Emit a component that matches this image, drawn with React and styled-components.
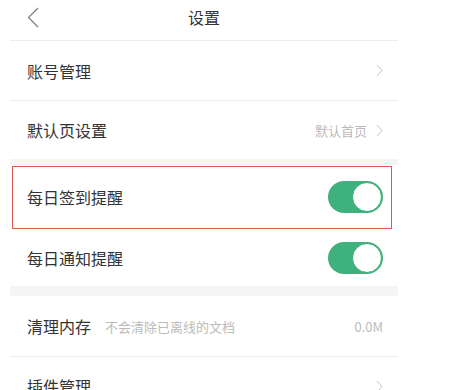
import React from 'react'
import styled, { createGlobalStyle } from 'styled-components'

const GlobalStyle = createGlobalStyle`
  html, body {
    margin: 0;
    padding: 0;
    background: #fff;
  }
  body {
    font-family: "Noto Sans CJK SC", "Noto Sans", sans-serif;
    color: #333;
  }
`

const Page = styled.div`
  width: 449px;
  height: 390px;
  overflow: hidden;
  background: #fff;
`

const List = styled.div`
  width: 388px;
  margin-left: 10px;
`

const Header = styled.div`
  position: relative;
  display: flex;
  align-items: center;
  justify-content: center;
  height: 41px;
  padding-bottom: 6px;
  box-sizing: border-box;
  border-bottom: 1px solid #eee;
`

const Back = styled.div`
  position: absolute;
  left: 17px;
  top: 7px;
  display: flex;
`

const Title = styled.div`
  font-size: 16px;
  color: #333;
`

const Row = styled.div`
  position: relative;
  display: flex;
  align-items: center;
  height: ${props => props.h}px;
  padding: 0 15px 0 17px;
  box-sizing: border-box;
  border-bottom: ${props => (props.line ? '1px solid #eee' : 'none')};
  &::after {
    content: "";
    display: ${props => (props.marked ? 'block' : 'none')};
    position: absolute;
    top: 1px;
    bottom: 0;
    left: 2px;
    right: 6px;
    border: 1.5px solid #e0584c;
    pointer-events: none;
  }
`

const Label = styled.div`
  font-size: 16px;
  color: #333;
`

const Hint = styled.div`
  margin-left: 14px;
  font-size: 13px;
  color: #bbb;
`

const Side = styled.div`
  margin-left: auto;
  display: flex;
  align-items: center;
  gap: 9px;
  font-size: 13px;
  color: #bbb;
`

const Band = styled.div`
  height: ${props => props.h}px;
  background: #f5f5f5;
`

const Track = styled.div`
  position: relative;
  width: 55px;
  height: 32px;
  border-radius: 16px;
  background: #3fb17d;
`

const Knob = styled.div`
  position: absolute;
  top: 1px;
  right: 1px;
  width: 30px;
  height: 30px;
  box-sizing: border-box;
  border-radius: 50%;
  background: #fff;
  border: 1px solid #3aa974;
`

const Chevron = () => (
  <svg width="7" height="13" viewBox="0 0 7 13">
    <polyline points="1,1 6,6.5 1,12" fill="none" stroke="#c4c4c4" strokeWidth="1" />
  </svg>
)

const Switch = () => (
  <Track>
    <Knob />
  </Track>
)

export default function App() {
  return (
    <Page>
      <GlobalStyle />
      <List>
        <Header>
          <Back>
            <svg width="12" height="21" viewBox="0 0 12 21">
              <polyline points="11,1 1.5,10.5 11,20" fill="none" stroke="#777" strokeWidth="1.1" />
            </svg>
          </Back>
          <Title>设置</Title>
        </Header>
        <Row h={60} line>
          <Label>账号管理</Label>
          <Side>
            <Chevron />
          </Side>
        </Row>
        <Row h={58}>
          <Label>默认页设置</Label>
          <Side>
            默认首页
            <Chevron />
          </Side>
        </Row>
        <Band h={6} />
        <Row h={64} marked>
          <Label>每日签到提醒</Label>
          <Side>
            <Switch />
          </Side>
        </Row>
        <Row h={57}>
          <Label>每日通知提醒</Label>
          <Side>
            <Switch />
          </Side>
        </Row>
        <Band h={10} />
        <Row h={61} line>
          <Label>清理内存</Label>
          <Hint>不会清除已离线的文档</Hint>
          <Side>0.0M</Side>
        </Row>
        <Row h={58}>
          <Label>插件管理</Label>
          <Side>
            <Chevron />
          </Side>
        </Row>
      </List>
    </Page>
  )
}
